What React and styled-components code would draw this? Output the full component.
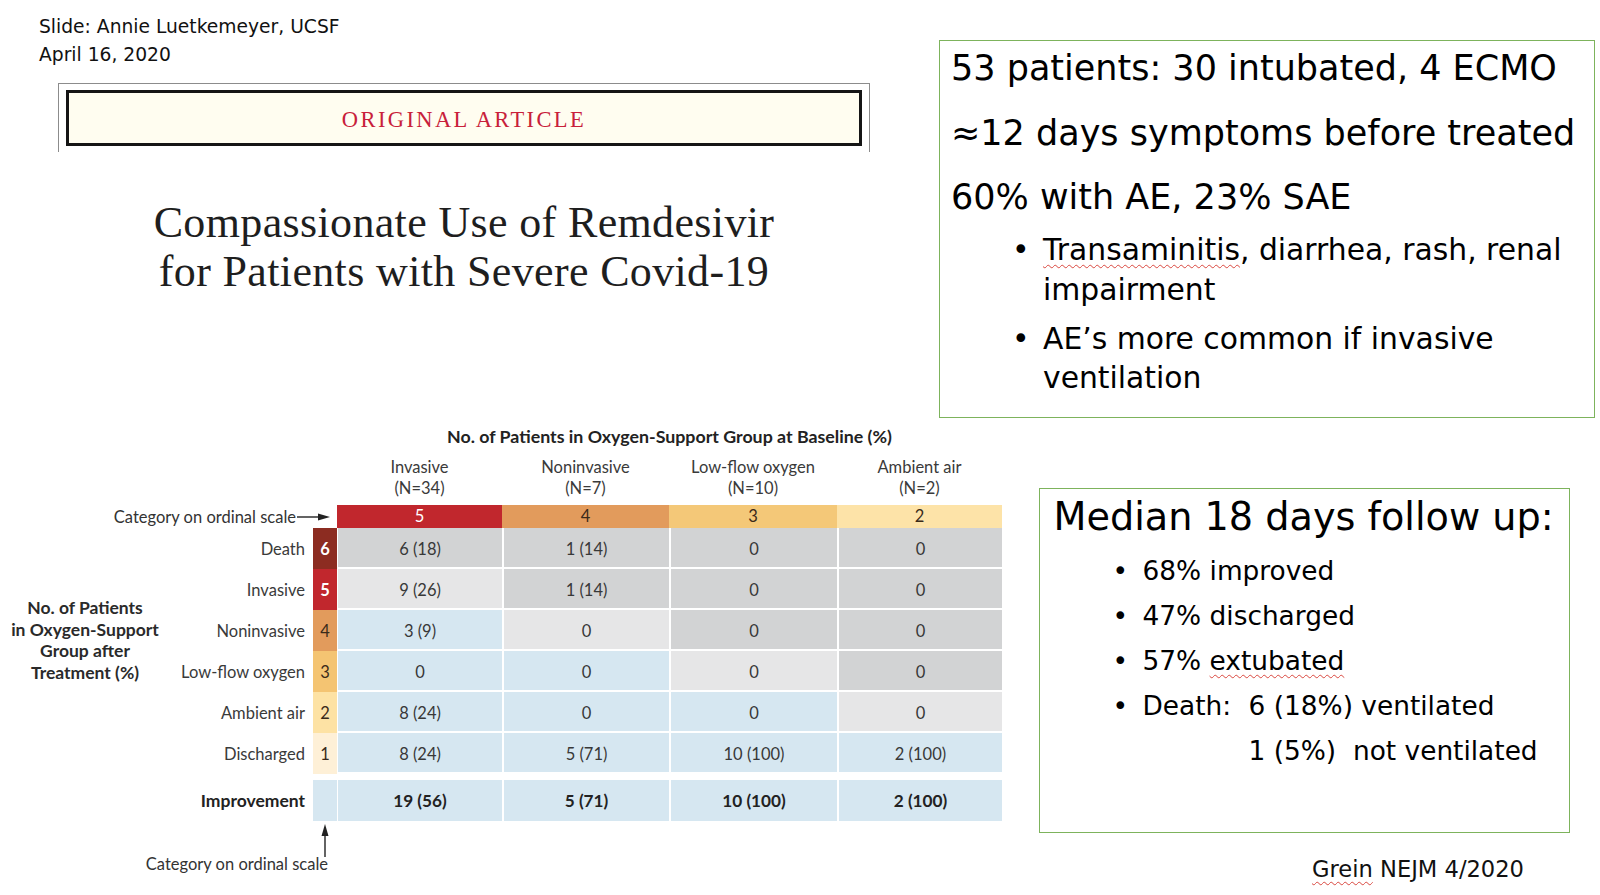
import React from "react";
import styled, { createGlobalStyle } from "styled-components";

const GlobalStyle = createGlobalStyle`
  html, body { margin: 0; padding: 0; background: #ffffff; }
  body { font-family: "DejaVu Sans", sans-serif; color: #000; overflow: hidden; }
  * { box-sizing: border-box; }
`;

const Slide = styled.div`
  width: 1600px;
  height: 895px;
  display: flex;
  flex-direction: column;
  background: #ffffff;
`;

const TopSection = styled.section`
  display: grid;
  grid-template-columns: 939px 656px;
  height: 420px;
`;

const BottomSection = styled.section`
  display: grid;
  grid-template-columns: 1039px 531px;
  height: 475px;
`;

const LeftTop = styled.div`
  padding-top: 12.5px;
`;

const Credit = styled.div`
  margin-left: 39px;
  font-family: "DejaVu Sans", sans-serif;
  font-size: 18.7px;
  line-height: 28px;
  color: #111;
`;

const BannerFrame = styled.div`
  margin: 14.5px 0 0 58px;
  width: 812px;
  height: 69px;
  border: 1.5px solid #8c8c8c;
  border-bottom: none;
  padding: 6px 7px 6px 7px;
`;

const BannerInner = styled.div`
  height: 56px;
  border: 3px solid #151515;
  background: #fffdf0;
  display: flex;
  align-items: center;
  justify-content: center;
  padding-top: 3px;
  font-family: "Liberation Serif", serif;
  font-size: 22.5px;
  letter-spacing: 2.4px;
  color: #c8203a;
`;

const Title = styled.h1`
  margin: 46px 0 0 58px;
  width: 812px;
  text-align: center;
  font-family: "Liberation Serif", serif;
  font-weight: normal;
  font-size: 44px;
  letter-spacing: 0.35px;
  line-height: 49px;
  color: #1e1e1e;
`;

const InfoBox = styled.div`
  margin-top: ${(p) => p.$top}px;
  height: ${(p) => p.$height}px;
  border: 1.5px solid #7db35c;
  padding: ${(p) => p.$pad};
  font-family: "DejaVu Sans", sans-serif;
  color: #000;
`;

const BigLine = styled.div`
  font-size: 35px;
  line-height: 40px;
  white-space: nowrap;
  margin-bottom: ${(p) => p.$after}px;
`;

const BoxHeading = styled.div`
  font-size: 38.2px;
  line-height: 44px;
  white-space: nowrap;
`;

const BulletList = styled.ul`
  list-style: none;
  margin: ${(p) => p.$mt}px 0 0;
  padding: 0 0 0 ${(p) => p.$indent}px;
`;

const BulletItem = styled.li`
  display: grid;
  grid-template-columns: ${(p) => p.$dot}px auto;
  font-size: ${(p) => p.$size}px;
  line-height: ${(p) => p.$lh}px;
  margin-bottom: ${(p) => p.$gap}px;
  white-space: nowrap;
  &::before {
    content: "•";
  }
`;

const Squiggle = styled.span`
  text-decoration: underline wavy #d9473f;
  text-decoration-thickness: 1px;
  text-underline-offset: 4px;
`;

const DeathRow = styled.div`
  display: flex;
`;

const DeathLabel = styled.span`
  width: 106px;
  flex: none;
`;

const DeathLines = styled.div`
  white-space: pre;
`;

const Citation = styled.div`
  margin: 21px 0 0 273px;
  font-family: "DejaVu Sans", sans-serif;
  font-size: 22.6px;
  line-height: 30px;
  color: #111;
`;

/* ---------- figure table ---------- */

const Table = styled.div`
  display: grid;
  grid-template-columns: 170px 143px 24px 165px 167px 168px 165px;
  grid-template-rows: 32px 53px 23px repeat(6, 41px) 47px 35px 16px;
  font-family: Lato, "Liberation Sans", sans-serif;
  font-size: 16.5px;
  color: #333;
`;

const TableTitle = styled.div`
  grid-column: 4 / 8;
  grid-row: 1;
  text-align: center;
  line-height: 32px;
  font-size: 17.8px;
  font-weight: 700;
  color: #222;
`;

const ColHead = styled.div`
  grid-column: ${(p) => p.$col};
  grid-row: 2;
  text-align: center;
  padding-top: 5px;
  line-height: 21px;
  color: #3a3a3a;
`;

const ScaleNote = styled.div`
  grid-column: 1 / 4;
  grid-row: ${(p) => p.$row};
  display: flex;
  align-items: center;
  justify-content: flex-end;
  gap: 1px;
  padding-right: ${(p) => p.$pr}px;
  line-height: 16px;
  color: #333;
`;

const BarCell = styled.div`
  grid-column: ${(p) => p.$col};
  grid-row: 3;
  background: ${(p) => p.$bg};
  color: ${(p) => p.$fg};
  text-align: center;
  line-height: 23px;
`;

const SideLabel = styled.div`
  grid-column: 1;
  grid-row: 4 / 10;
  align-self: start;
  margin-top: 69px;
  text-align: center;
  font-size: 17.5px;
  font-weight: 700;
  line-height: 21.5px;
  color: #2a2a2a;
`;

const RowLabel = styled.div`
  grid-column: 2;
  grid-row: ${(p) => p.$row};
  text-align: right;
  padding: 3px 8px 0 0;
  line-height: 36px;
  font-size: ${(p) => (p.$bold ? 17.5 : 16.5)}px;
  font-weight: ${(p) => (p.$bold ? 700 : 400)};
  color: ${(p) => (p.$bold ? "#222" : "#3a3a3a")};
  margin-top: ${(p) => (p.$bold ? 6 : 0)}px;
`;

const StripCell = styled.div`
  grid-column: 3;
  grid-row: ${(p) => p.$row};
  background: ${(p) => p.$bg};
  color: ${(p) => p.$fg};
  text-align: center;
  padding-top: 3px;
  line-height: 36px;
  font-weight: ${(p) => (p.$light ? 400 : 700)};
  margin-top: ${(p) => (p.$gapTop ? 6 : 0)}px;
`;

const DataCell = styled.div`
  grid-column: ${(p) => p.$col};
  grid-row: ${(p) => p.$row};
  background: ${(p) => p.$bg};
  border-left: ${(p) => (p.$col === 4 ? 1 : 2)}px solid #ffffff;
  border-bottom: ${(p) => (p.$gapTop ? 0 : 2)}px solid #ffffff;
  margin-top: ${(p) => (p.$gapTop ? 6 : 0)}px;
  padding-top: 3px;
  text-align: center;
  line-height: 36px;
  font-size: ${(p) => (p.$bold ? 17.2 : 16.5)}px;
  font-weight: ${(p) => (p.$bold ? 700 : 400)};
  color: ${(p) => (p.$bold ? "#222" : "#383838")};
`;

const UpArrow = styled.svg`
  grid-column: 3;
  grid-row: 11;
  justify-self: center;
  margin-top: 3px;
`;

const CELL = { D: "#d2d3d4", L: "#e6e6e7", B: "#d6e7f1" };

const baseCols = [
  { cat: 5, name: "Invasive", n: "(N=34)", bg: "#c1272d", fg: "#ffffff" },
  { cat: 4, name: "Noninvasive", n: "(N=7)", bg: "#e29b5c", fg: "#3a2a1a" },
  { cat: 3, name: "Low-flow oxygen", n: "(N=10)", bg: "#f4c878", fg: "#3a2a1a" },
  { cat: 2, name: "Ambient air", n: "(N=2)", bg: "#fde3a8", fg: "#3a2a1a" },
];

const rows = [
  { cat: 6, label: "Death", bg: "#8c2c21", fg: "#ffffff", vals: ["6 (18)", "1 (14)", "0", "0"] },
  { cat: 5, label: "Invasive", bg: "#c1272d", fg: "#ffffff", vals: ["9 (26)", "1 (14)", "0", "0"] },
  { cat: 4, label: "Noninvasive", bg: "#e29b5c", fg: "#3a2a1a", light: true, vals: ["3 (9)", "0", "0", "0"] },
  { cat: 3, label: "Low-flow oxygen", bg: "#f4c472", fg: "#3a2a1a", light: true, vals: ["0", "0", "0", "0"] },
  { cat: 2, label: "Ambient air", bg: "#fde2a4", fg: "#3a2a1a", light: true, vals: ["8 (24)", "0", "0", "0"] },
  { cat: 1, label: "Discharged", bg: "#fef0d7", fg: "#3a2a1a", light: true, vals: ["8 (24)", "5 (71)", "10 (100)", "2 (100)"] },
];

const improvement = ["19 (56)", "5 (71)", "10 (100)", "2 (100)"];

function shade(r, c) {
  if (r === c) return CELL.L;
  if (r > c) return CELL.D;
  return CELL.B;
}

function RightArrow() {
  return (
    <svg width="33" height="10" viewBox="0 0 33 10">
      <line x1="0" y1="5" x2="24" y2="5" stroke="#222" strokeWidth="1.4" />
      <polygon points="21,1.5 33,5 21,8.5" fill="#222" />
    </svg>
  );
}

function OutcomeFigure() {
  return (
    <Table>
      <TableTitle>No. of Patients in Oxygen-Support Group at Baseline (%)</TableTitle>
      {baseCols.map((c, i) => (
        <ColHead key={c.name} $col={i + 4}>
          {c.name}
          <br />
          {c.n}
        </ColHead>
      ))}
      <ScaleNote $row={3} $pr={7}>
        Category on ordinal scale
        <RightArrow />
      </ScaleNote>
      {baseCols.map((c, i) => (
        <BarCell key={c.cat} $col={i + 4} $bg={c.bg} $fg={c.fg}>
          {c.cat}
        </BarCell>
      ))}
      <SideLabel>
        No. of Patients
        <br />
        in Oxygen-Support
        <br />
        Group after
        <br />
        Treatment (%)
      </SideLabel>
      {rows.map((r, ri) => (
        <React.Fragment key={r.label}>
          <RowLabel $row={ri + 4}>{r.label}</RowLabel>
          <StripCell $row={ri + 4} $bg={r.bg} $fg={r.fg} $light={r.light}>
            {r.cat}
          </StripCell>
          {r.vals.map((v, ci) => (
            <DataCell key={ci} $row={ri + 4} $col={ci + 4} $bg={shade(r.cat, baseCols[ci].cat)}>
              {v}
            </DataCell>
          ))}
        </React.Fragment>
      ))}
      <RowLabel $row={10} $bold>
        Improvement
      </RowLabel>
      <StripCell $row={10} $bg={CELL.B} $gapTop />
      {improvement.map((v, ci) => (
        <DataCell key={ci} $row={10} $col={ci + 4} $bg={CELL.B} $bold $gapTop>
          {v}
        </DataCell>
      ))}
      <UpArrow width="10" height="33" viewBox="0 0 10 33">
        <polygon points="5,0 1.5,12 8.5,12" fill="#222" />
        <line x1="5" y1="9" x2="5" y2="33" stroke="#222" strokeWidth="1.4" />
      </UpArrow>
      <ScaleNote $row={12} $pr={9}>
        Category on ordinal scale
      </ScaleNote>
    </Table>
  );
}

export default function App() {
  return (
    <>
      <GlobalStyle />
      <Slide>
        <TopSection>
          <LeftTop>
            <Credit>
              Slide: Annie Luetkemeyer, UCSF
              <br />
              April 16, 2020
            </Credit>
            <BannerFrame>
              <BannerInner>ORIGINAL ARTICLE</BannerInner>
            </BannerFrame>
            <Title>
              Compassionate Use of Remdesivir
              <br />
              for Patients with Severe Covid-19
            </Title>
          </LeftTop>
          <InfoBox $top={40} $height={378} $pad="7px 0 0 11px">
            <BigLine $after={24.5}>53 patients: 30 intubated, 4 ECMO</BigLine>
            <BigLine $after={24.5}>≈12 days symptoms before treated</BigLine>
            <BigLine $after={0}>60% with AE, 23% SAE</BigLine>
            <BulletList $mt={13} $indent={61}>
              <BulletItem $dot={31} $size={29.8} $lh={39.5} $gap={9.5}>
                <span>
                  <Squiggle>Transaminitis</Squiggle>, diarrhea, rash, renal
                  <br />
                  impairment
                </span>
              </BulletItem>
              <BulletItem $dot={31} $size={29.8} $lh={39.5} $gap={0}>
                <span>
                  AE’s more common if invasive
                  <br />
                  ventilation
                </span>
              </BulletItem>
            </BulletList>
          </InfoBox>
        </TopSection>
        <BottomSection>
          <OutcomeFigure />
          <div>
            <InfoBox $top={68} $height={345} $pad="6px 0 0 13.5px">
              <BoxHeading>Median 18 days follow up:</BoxHeading>
              <BulletList $mt={9} $indent={59}>
                <BulletItem $dot={30} $size={26.4} $lh={45} $gap={0}>
                  <span>68% improved</span>
                </BulletItem>
                <BulletItem $dot={30} $size={26.4} $lh={45} $gap={0}>
                  <span>47% discharged</span>
                </BulletItem>
                <BulletItem $dot={30} $size={26.4} $lh={45} $gap={0}>
                  <span>
                    57% <Squiggle>extubated</Squiggle>
                  </span>
                </BulletItem>
                <BulletItem $dot={30} $size={26.4} $lh={45} $gap={0}>
                  <DeathRow>
                    <DeathLabel>Death:</DeathLabel>
                    <DeathLines>
                      {"6 (18%) ventilated"}
                      <br />
                      {"1 (5%)  not ventilated"}
                    </DeathLines>
                  </DeathRow>
                </BulletItem>
              </BulletList>
            </InfoBox>
            <Citation>
              <Squiggle>Grein</Squiggle> NEJM 4/2020
            </Citation>
          </div>
        </BottomSection>
      </Slide>
    </>
  );
}
